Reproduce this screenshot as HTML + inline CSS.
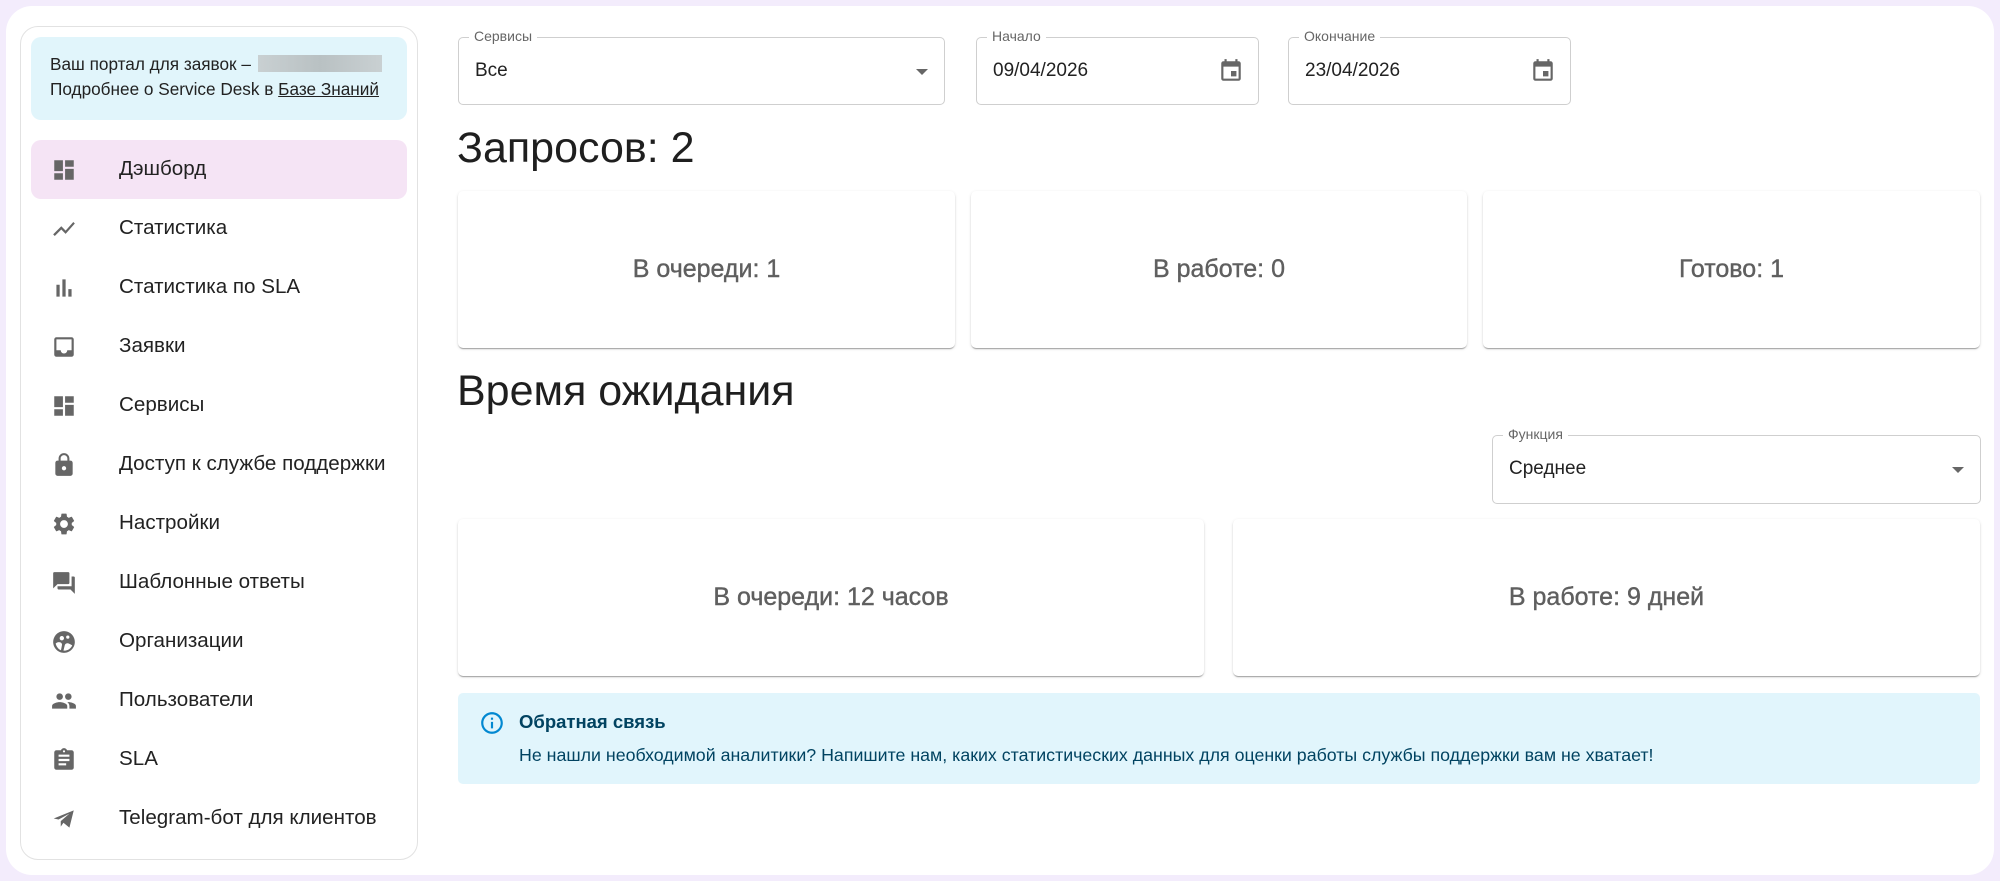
<!DOCTYPE html>
<html><head><meta charset="utf-8"><style>
*{box-sizing:border-box;margin:0;padding:0}
body{width:2000px;height:881px;background:#f3ecfc;font-family:"Liberation Sans",sans-serif;position:relative;overflow:hidden;color:#1f1f1f}
.frame{position:absolute;left:6px;top:6px;width:1988px;height:869px;background:#fff;border-radius:26px}
.side{position:absolute;left:20px;top:26px;width:398px;height:834px;border:1px solid #e2e2e2;border-radius:18px;background:#fff}
.info{position:absolute;left:31px;top:37px;width:376px;height:83px;background:#e1f5fb;border-radius:10px;font-size:17.2px;line-height:25px;padding:15px 0 0 19px;color:#222;white-space:nowrap}
.blur{display:inline-block;width:124px;height:17px;background:linear-gradient(90deg,#c9d0d2,#b9c1c3,#c9d0d2);vertical-align:-2px;margin-left:2px}
.item{position:absolute;left:31px;width:376px;height:59px;border-radius:10px;font-size:20.6px;color:#222}
.item.active{background:#f5e4f5}
.item svg{position:absolute;left:20px;top:17px;width:26px;height:26px;fill:#666}
.item span{position:absolute;left:88px;top:17px}
.fld{position:absolute;height:68px;border:1px solid #cfcfcf;border-radius:5px}
.fld label{position:absolute;top:-10px;left:10px;background:#fff;padding:0 5px;font-size:14px;color:#666}
.fld .v{position:absolute;left:16px;top:22px;font-size:19px;color:#222}
.arrow{position:absolute;right:16px;top:31px;border-left:6px solid transparent;border-right:6px solid transparent;border-top:6px solid #666}
.cal{position:absolute;right:14px;top:20px;width:26px;height:26px;fill:#666}
h2{position:absolute;left:457px;font-weight:400;font-size:43px;color:#1f1f1f}
.card{position:absolute;background:#fff;border-radius:5px;box-shadow:0 2px 1px -1px rgba(0,0,0,.2),0 1px 1px rgba(0,0,0,.14),0 1px 3px rgba(0,0,0,.12);display:flex;align-items:center;justify-content:center;font-size:25px;color:#5f5f5f;-webkit-text-stroke:0.4px #5f5f5f}
.alert{position:absolute;left:458px;top:693px;width:1522px;height:91px;background:#e1f5fc;border-radius:5px;color:#014361}
</style></head><body>
<div class="frame"></div>
<div class="side"></div>
<div class="info">Ваш портал для заявок – <span class="blur"></span><br>Подробнее о Service Desk в <u>Базе Знаний</u></div>

<div class="item active" style="top:140px"><svg viewBox="0 0 24 24"><path d="M3 13h8V3H3v10zm0 8h8v-6H3v6zm10 0h8V11h-8v10zm0-18v6h8V3h-8z"/></svg><span>Дэшборд</span></div>
<div class="item" style="top:199px"><svg viewBox="0 0 24 24"><path d="M3.5 18.49l6-6.01 4 4L22 6.92l-1.41-1.41-7.09 7.970-4-4L2 16.99z"/></svg><span>Статистика</span></div>
<div class="item" style="top:258px"><svg viewBox="0 0 24 24"><path d="M5 9h3v11H5zm5.5-5h3v16h-3zM16 13h3v7h-3z"/></svg><span>Статистика по SLA</span></div>
<div class="item" style="top:317px"><svg viewBox="0 0 24 24"><path d="M19 3H5c-1.1 0-2 .9-2 2v14c0 1.1.9 2 2 2h14c1.1 0 2-.9 2-2V5c0-1.1-.9-2-2-2zm0 12h-4c0 1.66-1.35 3-3 3s-3-1.34-3-3H5V5h14v10z"/></svg><span>Заявки</span></div>
<div class="item" style="top:376px"><svg viewBox="0 0 24 24"><path d="M3 13h8V3H3v10zm0 8h8v-6H3v6zm10 0h8V11h-8v10zm0-18v6h8V3h-8z"/></svg><span>Сервисы</span></div>
<div class="item" style="top:435px"><svg viewBox="0 0 24 24"><path d="M18 8h-1V6c0-2.76-2.240-5-5-5S7 3.24 7 6v2H6c-1.1 0-2 .9-2 2v10c0 1.1.9 2 2 2h12c1.1 0 2-.9 2-2V10c0-1.1-.9-2-2-2zm-6 9c-1.1 0-2-.9-2-2s.9-2 2-2 2 .9 2 2-.9 2-2 2zm3.1-9H8.9V6c0-1.71 1.39-3.1 3.1-3.1 1.71 0 3.1 1.39 3.1 3.1v2z"/></svg><span>Доступ к службе поддержки</span></div>
<div class="item" style="top:494px"><svg viewBox="0 0 24 24"><path d="M19.14 12.94c.04-.3.06-.61.06-.94 0-.32-.02-.64-.07-.94l2.03-1.58a.49.49 0 00.12-.61l-1.92-3.32a.49.49 0 00-.59-.22l-2.39.96c-.5-.38-1.03-.7-1.62-.94l-.36-2.54a.48.48 0 00-.48-.41h-3.84c-.24 0-.43.17-.47.41l-.36 2.54c-.59.24-1.130.57-1.62.94l-2.39-.96a.49.49 0 00-.59.22L2.74 8.87c-.12.21-.08.47.12.61l2.03 1.58c-.05.3-.09.63-.09.94s.02.64.07.94l-2.03 1.58a.49.49 0 00-.12.61l1.92 3.32c.12.22.37.29.59.22l2.39-.96c.5.38 1.03.7 1.62.94l.36 2.54c.05.24.24.41.48.41h3.84c.24 0 .44-.17.47-.41l.36-2.54c.59-.24 1.13-.56 1.62-.94l2.39.96c.22.08.47 0 .59-.22l1.92-3.32c.12-.22.07-.47-.12-.61l-2.01-1.58zM12 15.6c-1.98 0-3.6-1.62-3.6-3.6s1.62-3.6 3.6-3.6 3.6 1.62 3.6 3.6-1.62 3.6-3.6 3.6z"/></svg><span>Настройки</span></div>
<div class="item" style="top:553px"><svg viewBox="0 0 24 24"><path d="M21 6h-2v9H6v2c0 .55.45 1 1 1h11l4 4V7c0-.55-.45-1-1-1zm-4 6V3c0-.55-.45-1-1-1H3c-.55 0-1 .45-1 1v14l4-4h10c.55 0 1-.45 1-1z"/></svg><span>Шаблонные ответы</span></div>
<div class="item" style="top:612px"><svg viewBox="0 0 24 24"><path d="M12 2C6.48 2 2 6.48 2 12s4.48 10 10 10 10-4.48 10-10S17.52 2 12 2zm-4 6.5a2 2 0 114 0 2 2 0 01-4 0zm6-1a1.5 1.5 0 113 0 1.5 1.5 0 01-3 0zM4.3 13.4C5.5 12 7.5 11.7 9 12.5c1 .6 1.3 1.6 1.1 2.5l-.9 4.6C6.8 18.7 5 16.3 4.3 13.4zm7.2 6.6l1.2-5c.4-1.4 1.9-2.1 3.3-1.7 1.5.5 2.6 1.3 3.6 1.8-1.2 2.9-4.1 4.9-7.5 4.9h-.6z"/></svg><span>Организации</span></div>
<div class="item" style="top:671px"><svg viewBox="0 0 24 24"><path d="M16 11c1.66 0 2.99-1.34 2.99-3S17.66 5 16 5c-1.66 0-3 1.34-3 3s1.34 3 3 3zm-8 0c1.66 0 2.99-1.34 2.99-3S9.66 5 8 5C6.34 5 5 6.34 5 8s1.34 3 3 3zm0 2c-2.33 0-7 1.17-7 3.5V19h14v-2.5c0-2.33-4.67-3.5-7-3.5zm8 0c-.29 0-.62.02-.97.05 1.16.84 1.97 1.97 1.97 3.45V19h6v-2.5c0-2.33-4.67-3.5-7-3.5z"/></svg><span>Пользователи</span></div>
<div class="item" style="top:730px"><svg viewBox="0 0 24 24"><path d="M19 3h-4.18C14.4 1.84 13.3 1 12 1c-1.3 0-2.4.84-2.82 2H5c-1.1 0-2 .9-2 2v14c0 1.1.9 2 2 2h14c1.1 0 2-.9 2-2V5c0-1.1-.9-2-2-2zm-7 0c.55 0 1 .45 1 1s-.45 1-1 1-1-.45-1-1 .45-1 1-1zm2 14H7v-2h7v2zm3-4H7v-2h10v2zm0-4H7V7h10v2z"/></svg><span>SLA</span></div>
<div class="item" style="top:789px"><svg viewBox="0 0 24 24"><path d="M2.5 11.5L21 4l-4 16-5.5-4.5-2.5 3.5v-5l8-7-10 5.5z"/></svg><span>Telegram-бот для клиентов</span></div>

<div class="fld" style="left:458px;top:37px;width:487px"><label>Сервисы</label><div class="v">Все</div><div class="arrow"></div></div>
<div class="fld" style="left:976px;top:37px;width:283px"><label>Начало</label><div class="v">09/04/2026</div><svg class="cal" viewBox="0 0 24 24"><path d="M17 12h-5v5h5v-5zM16 1v2H8V1H6v2H5c-1.11 0-1.99.9-1.99 2L3 19c0 1.1.89 2 2 2h14c1.1 0 2-.9 2-2V5c0-1.1-.9-2-2-2h-1V1h-2zm3 18H5V8h14v11z"/></svg></div>
<div class="fld" style="left:1288px;top:37px;width:283px"><label>Окончание</label><div class="v">23/04/2026</div><svg class="cal" viewBox="0 0 24 24"><path d="M17 12h-5v5h5v-5zM16 1v2H8V1H6v2H5c-1.11 0-1.99.9-1.99 2L3 19c0 1.1.89 2 2 2h14c1.1 0 2-.9 2-2V5c0-1.1-.9-2-2-2h-1V1h-2zm3 18H5V8h14v11z"/></svg></div>

<h2 style="top:124px">Запросов: 2</h2>
<div class="card" style="left:458px;top:191px;width:497px;height:157px">В очереди: 1</div>
<div class="card" style="left:971px;top:191px;width:496px;height:157px">В работе: 0</div>
<div class="card" style="left:1483px;top:191px;width:497px;height:157px">Готово: 1</div>

<h2 style="top:367px">Время ожидания</h2>
<div class="fld" style="left:1492px;top:435px;width:489px;height:69px"><label>Функция</label><div class="v">Среднее</div><div class="arrow"></div></div>
<div class="card" style="left:458px;top:519px;width:746px;height:157px">В очереди: 12 часов</div>
<div class="card" style="left:1233px;top:519px;width:747px;height:157px">В работе: 9 дней</div>

<div class="alert">
<svg style="position:absolute;left:21px;top:17px;width:26px;height:26px;fill:#0288d1" viewBox="0 0 24 24"><path d="M11 7h2v2h-2zm0 4h2v6h-2zm1-9C6.48 2 2 6.48 2 12s4.48 10 10 10 10-4.48 10-10S17.52 2 12 2zm0 18c-4.41 0-8-3.59-8-8s3.59-8 8-8 8 3.59 8 8-3.59 8-8 8z"/></svg>
<div style="position:absolute;left:61px;top:18px;font-size:18.5px;font-weight:bold">Обратная связь</div>
<div style="position:absolute;left:61px;top:52px;font-size:17.8px;white-space:nowrap">Не нашли необходимой аналитики? Напишите нам, каких статистических данных для оценки работы службы поддержки вам не хватает!</div>
</div>
</body></html>
